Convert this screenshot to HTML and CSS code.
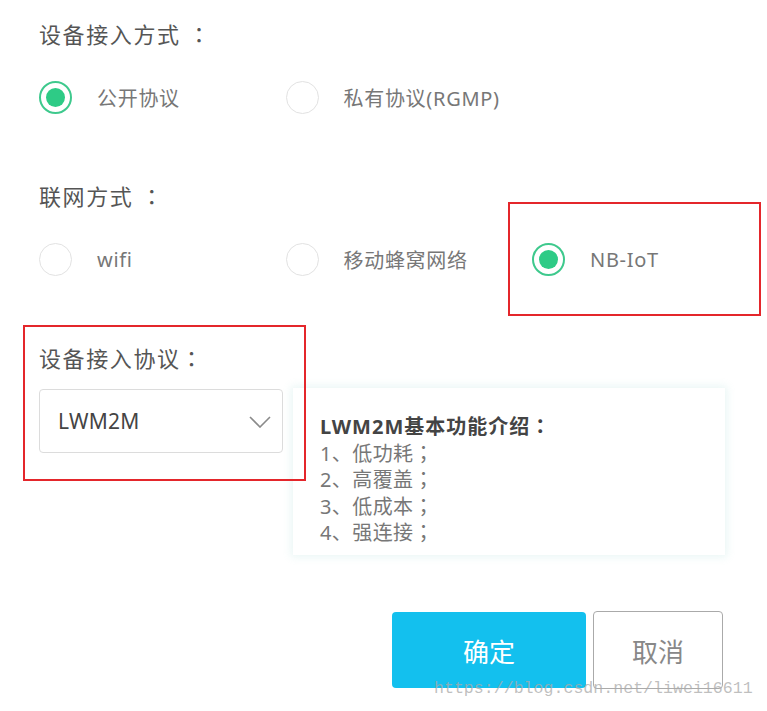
FILE: index.html
```html
<!DOCTYPE html>
<html lang="zh-CN">
<head>
<meta charset="utf-8">
<link rel="stylesheet" href="styles.css">
</head>
<body>
<div class="page">
  <div class="title">设备接入方式 <span class="punct" lang="zh-TW">：</span></div>
  <div class="radio-row first">
    <div class="option"><span class="radio checked"></span><span class="label">公开协议</span></div>
    <div class="option"><span class="radio"></span><span class="label">私有协议(RGMP)</span></div>
  </div>

  <div class="title gap">联网方式 <span class="punct" lang="zh-TW">：</span></div>
  <div class="radio-row">
    <div class="option"><span class="radio"></span><span class="label">wifi</span></div>
    <div class="option"><span class="radio"></span><span class="label">移动蜂窝网络</span></div>
    <div class="option"><span class="radio checked"></span><span class="label">NB-IoT</span></div>
  </div>

  <div class="title gap">设备接入协议<span class="punct" lang="zh-TW">：</span></div>
  <div class="proto-row">
    <div class="select">
      <span class="select-value">LWM2M</span>
      <svg class="chevron" width="22" height="12" viewBox="0 0 22 12"><path d="M1 1 L11 11 L21 1" fill="none" stroke="#8a8a8a" stroke-width="1.6"/></svg>
    </div>
    <div class="card">
      <div class="card-title">LWM2M基本功能介绍<span class="punct" lang="zh-TW">：</span></div>
      <div class="card-line">1、低功耗<span class="punct" lang="zh-TW">；</span></div>
      <div class="card-line">2、高覆盖<span class="punct" lang="zh-TW">；</span></div>
      <div class="card-line">3、低成本<span class="punct" lang="zh-TW">；</span></div>
      <div class="card-line">4、强连接<span class="punct" lang="zh-TW">；</span></div>
    </div>
  </div>

  <div class="actions">
    <button class="btn btn-primary">确定</button>
    <button class="btn btn-default">取消</button>
  </div>

  <div class="mark mark-net"></div>
  <div class="mark mark-proto"></div>
  <div class="watermark">https://blog.csdn.net/liwei16611</div>
</div>
</body>
</html>
```

FILE: styles.css
```css
* { box-sizing: border-box; }
html, body { margin: 0; padding: 0; background: #fff; }
.page {
  position: relative;
  width: 767px;
  height: 711px;
  padding: 17px 0 0 39px;
  font-family: "Noto Sans", "Noto Sans CJK SC", sans-serif;
  overflow: hidden;
}
.punct { font-family: "Noto Sans CJK TC", sans-serif; }
.title {
  font-size: 22px;
  letter-spacing: 1.6px;
  line-height: 32px;
  height: 32px;
  color: #555;
  white-space: nowrap;
}
.title.gap { margin-top: 65px; }
.radio-row {
  display: flex;
  align-items: center;
  height: 34px;
  margin-top: 31px;
}
.option {
  flex: none;
  width: 246.5px;
  display: flex;
  align-items: center;
}
.radio {
  width: 33px;
  height: 33px;
  border-radius: 50%;
  border: 1.5px solid #e2e2e2;
  display: flex;
  align-items: center;
  justify-content: center;
  flex: none;
}
.radio.checked { border: 2px solid #3ec98d; }
.radio.checked::after {
  content: "";
  width: 19px;
  height: 19px;
  border-radius: 50%;
  background: #2ecb86;
}
.label {
  margin-left: 25px;
  font-size: 20px;
  letter-spacing: 0.7px;
  color: #777;
  white-space: nowrap;
}
.proto-row {
  display: flex;
  align-items: flex-start;
  margin-top: 16px;
}
.select {
  flex: none;
  width: 244px;
  height: 64px;
  border: 1px solid #dcdcdc;
  border-radius: 4px;
  display: flex;
  align-items: center;
  justify-content: space-between;
  padding: 0 11px 0 18px;
}
.select-value {
  font-size: 21px;
  letter-spacing: 0.3px;
  color: #444;
}
.chevron { display: block; margin-top: 2px; }
.card {
  flex: none;
  margin-top: -1px;
  margin-left: 10px;
  width: 432px;
  height: 167px;
  padding: 25px 0 0 27px;
  background: #fff;
  box-shadow: 0 0 8px 2px rgba(120, 200, 190, 0.16);
  font-size: 20px;
  line-height: 25.5px;
  color: #777;
}
.card-title { font-weight: bold; color: #444; font-size: 20px; letter-spacing: 1px; }
.card-line { letter-spacing: 0.4px; }
.actions {
  display: flex;
  justify-content: flex-end;
  align-items: center;
  gap: 7px;
  margin-top: 56px;
  padding-right: 44px;
}
.btn {
  font-family: "Noto Sans CJK SC", sans-serif;
  font-size: 26px;
  border-radius: 4px;
  cursor: pointer;
}
.btn-primary {
  width: 194px;
  height: 76px;
  background: #13c0ee;
  color: #fff;
  border: none;
}
.btn-default {
  width: 130px;
  height: 78px;
  background: #fff;
  color: #888;
  border: 1.5px solid #aaa;
}
.mark {
  position: absolute;
  border: 2.5px solid #e4262b;
  pointer-events: none;
}
.mark-net { left: 508px; top: 202px; width: 253px; height: 114px; }
.mark-proto { left: 23px; top: 325px; width: 283px; height: 156px; }
.watermark {
  position: absolute;
  left: 434px;
  top: 679px;
  font-family: "Liberation Mono", monospace;
  font-size: 16.6px;
  color: rgba(170, 170, 170, 0.75);
  white-space: nowrap;
  pointer-events: none;
}
```
